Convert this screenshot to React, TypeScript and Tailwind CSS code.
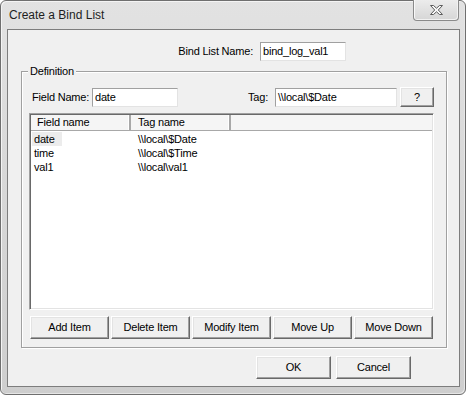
import React from 'react';

const sunkenEdit =
  'bg-white border border-t-[#a0a0a0] border-l-[#a0a0a0] border-b-[#e3e3e3] border-r-[#e3e3e3] flex items-center pl-[2px] text-[11px] leading-none text-black';

const raisedButton =
  'bg-[#f0f0f0] border border-t-white border-l-white border-b-[#696969] border-r-[#696969] shadow-[inset_-1px_-1px_0_#a0a0a0,inset_1px_1px_0_#e3e3e3] flex items-center justify-center text-[11px] leading-none text-black';

const rows = [
  { field: 'date', tag: '\\\\local\\$Date' },
  { field: 'time', tag: '\\\\local\\$Time' },
  { field: 'val1', tag: '\\\\local\\val1' },
];

const actions = ['Add Item', 'Delete Item', 'Modify Item', 'Move Up', 'Move Down'];

const CloseGlyph = () => (
  <svg width="13" height="10" viewBox="0 0 13 10">
    <polygon
      points="0.5,0.5 3.5,0.5 6.5,3.2 9.5,0.5 12.5,0.5 8.3,5 12.5,9.5 9.5,9.5 6.5,6.8 3.5,9.5 0.5,9.5 4.7,5"
      fill="#f7f7f7"
      stroke="#5c5c5c"
      strokeWidth="1"
      strokeLinejoin="round"
    />
  </svg>
);

export default function App() {
  return (
    <div className="w-[470px] h-[398px] bg-white font-['Liberation_Sans',Arial,sans-serif] text-black tracking-[-0.2px]">
      {/* Window frame */}
      <div className="w-[466px] h-[395px] rounded-[6px] border border-[#6f6f6f] bg-linear-to-b from-[#e2e2e2] via-[#d7d7d7] to-[#cecece] shadow-[inset_1px_1px_0_#f4f4f4,inset_-1px_-1px_0_#e6e6e6] flex flex-col">
        {/* Title bar */}
        <div className="h-[28px] flex items-start justify-between shrink-0">
          <span className="mt-[7px] ml-[8px] text-[12px] leading-[15px] text-[#1e1e1e] tracking-normal">Create a Bind List</span>
          <div className="-mt-[1px] mr-[6px] w-[46px] h-[21px] rounded-b-[4px] border border-t-0 border-[#8a8a8a] bg-linear-to-b from-[#ececec] to-[#d6d6d6] shadow-[inset_1px_0_0_#f8f8f8,inset_-1px_-1px_0_#f2f2f2] flex items-center justify-center">
            <CloseGlyph />
          </div>
        </div>

        {/* Client area */}
        <div className="ml-[6px] mr-[5px] h-[358px] border border-[#7d7d7d] bg-[#f0f0f0] flex flex-col">
          {/* Bind list name */}
          <div className="mt-[12px] flex items-center">
            <span className="w-[245px] text-right text-[11px] leading-none">Bind List Name:</span>
            <div className={`ml-[7px] w-[86px] h-[19px] ${sunkenEdit}`}>bind_log_val1</div>
          </div>

          {/* Definition group */}
          <div className="relative mt-[10px] ml-[13px] w-[426px] h-[277px] border border-[#a0a0a0] shadow-[inset_1px_1px_0_#ffffff,1px_1px_0_#ffffff] flex flex-col">
            <span className="absolute -top-[7px] left-[6px] px-[2px] bg-[#f0f0f0] text-[11px] leading-[13px]">Definition</span>

            <div className="mt-[15px] pl-[10px] flex items-center">
              <span className="w-[60px] text-[11px] leading-none">Field Name:</span>
              <div className={`w-[86px] h-[19px] ${sunkenEdit}`}>date</div>
              <span className="w-[90px] text-right text-[11px] leading-none">Tag:</span>
              <div className={`ml-[7px] w-[122px] h-[19px] ${sunkenEdit}`}>\\local\$Date</div>
              <button className={`ml-[3px] w-[34px] h-[20px] ${raisedButton}`}>?</button>
            </div>

            {/* List view */}
            <div className="mt-[6px] ml-[7px] w-[405px] h-[197px] bg-white border border-t-[#a0a0a0] border-l-[#a0a0a0] border-b-white border-r-white shadow-[inset_1px_1px_0_#696969,inset_-1px_-1px_0_#e3e3e3] p-[1px] flex flex-col">
              <div className="h-[16px] flex bg-[#f5f5f5] border-b border-[#a8a8a8] text-[11px] leading-none shrink-0">
                <div className="w-[100px] flex items-center pl-[6px] border-r-2 border-r-[#a8a8a8] shadow-[inset_-1px_0_0_#ffffff]">Field name</div>
                <div className="w-[100px] flex items-center pl-[7px] border-r-2 border-r-[#a8a8a8] shadow-[inset_-1px_0_0_#ffffff]">Tag name</div>
                <div className="flex-1" />
              </div>
              <div className="pt-[1px] flex flex-col">
                {rows.map((row, i) => (
                  <div key={row.field} className="h-[14px] flex items-center text-[11px] leading-none">
                    <div className="w-[100px] pl-[1px]">
                      <span className={`inline-flex items-center h-[14px] w-[30px] pl-[2px] ${i === 0 ? 'bg-[#ececec]' : ''}`}>
                        {row.field}
                      </span>
                    </div>
                    <div className="w-[100px] pl-[7px]">{row.tag}</div>
                  </div>
                ))}
              </div>
            </div>

            {/* Item buttons */}
            <div className="mt-[6px] ml-[8px] flex gap-[2px]">
              {actions.map((label) => (
                <button key={label} className={`w-[79px] h-[23px] ${raisedButton}`}>
                  {label}
                </button>
              ))}
            </div>
          </div>

          {/* Dialog buttons */}
          <div className="mt-[8px] ml-[248px] flex gap-[5px]">
            <button className={`w-[75px] h-[23px] ${raisedButton}`}>OK</button>
            <button className={`w-[75px] h-[23px] ${raisedButton}`}>Cancel</button>
          </div>
        </div>
      </div>
    </div>
  );
}
